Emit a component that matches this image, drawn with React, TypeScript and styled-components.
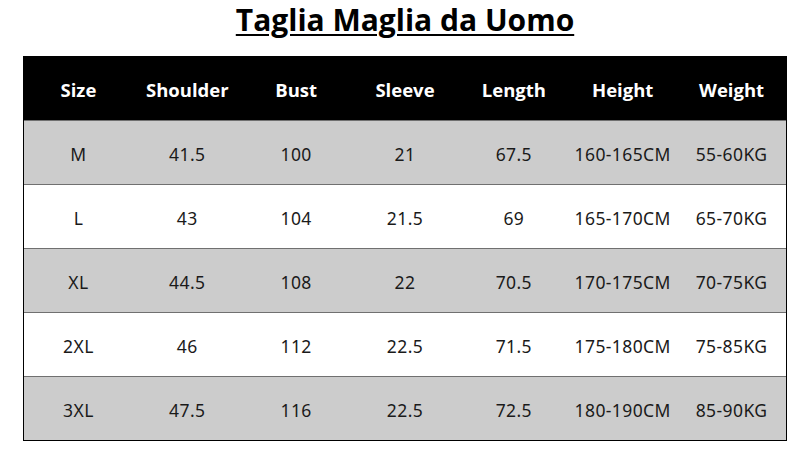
import React from "react";
import styled, { createGlobalStyle } from "styled-components";

const Global = createGlobalStyle`
  html, body { margin: 0; padding: 0; background: #ffffff; }
  body { font-family: "Noto Sans", "Open Sans", sans-serif; }
`;

const Page = styled.div`
  width: 810px;
  height: 461px;
  display: flex;
  flex-direction: column;
  align-items: center;
`;

const Title = styled.h1`
  margin: 0;
  height: 56px;
  display: flex;
  align-items: flex-start;
  justify-content: center;
  box-sizing: border-box;
  font-family: "Open Sans", "Noto Sans", sans-serif;
  font-weight: 700;
  font-size: 30px;
  line-height: 40px;
  color: #000;
  text-decoration: underline;
  text-decoration-thickness: 2px;
  text-underline-offset: 3px;
`;

const Table = styled.div`
  width: 764px;
  box-sizing: border-box;
  border-left: 1px solid #000;
  border-right: 1px solid #000;
  border-bottom: 1px solid #000;
  display: flex;
  flex-direction: column;
`;

const Row = styled.div<{ $variant: "head" | "gray" | "white" }>`
  display: grid;
  grid-template-columns: repeat(7, 1fr);
  height: ${(p) => (p.$variant === "head" ? "64px" : "63px")};
  background: ${(p) =>
    p.$variant === "head" ? "#000" : p.$variant === "gray" ? "#cccccc" : "#ffffff"};
  border-top: ${(p) => (p.$variant === "head" ? "none" : "1px solid #707070")};
`;

const Cell = styled.div<{ $head?: boolean }>`
  display: flex;
  align-items: center;
  justify-content: center;
  white-space: nowrap;
  box-sizing: border-box;
  padding-top: ${(p) => (p.$head ? "2px" : "3px")};
  font-family: ${(p) => (p.$head ? `"Open Sans", "Noto Sans", sans-serif` : `"Noto Sans", sans-serif`)};
  font-weight: ${(p) => (p.$head ? 700 : 400)};
  font-size: ${(p) => (p.$head ? "18.5px" : "17.5px")};
  letter-spacing: ${(p) => (p.$head ? "0" : "0.4px")};
  color: ${(p) => (p.$head ? "#ffffff" : "#1a1a1a")};
`;

const headers = ["Size", "Shoulder", "Bust", "Sleeve", "Length", "Height", "Weight"];
const rows = [
  ["M", "41.5", "100", "21", "67.5", "160-165CM", "55-60KG"],
  ["L", "43", "104", "21.5", "69", "165-170CM", "65-70KG"],
  ["XL", "44.5", "108", "22", "70.5", "170-175CM", "70-75KG"],
  ["2XL", "46", "112", "22.5", "71.5", "175-180CM", "75-85KG"],
  ["3XL", "47.5", "116", "22.5", "72.5", "180-190CM", "85-90KG"],
];

export default function App() {
  return (
    <>
      <Global />
      <Page>
        <Title>Taglia Maglia da Uomo</Title>
        <Table>
          <Row $variant="head">
            {headers.map((h) => (
              <Cell key={h} $head>
                {h}
              </Cell>
            ))}
          </Row>
          {rows.map((r, i) => (
            <Row key={r[0]} $variant={i % 2 === 0 ? "gray" : "white"}>
              {r.map((c, j) => (
                <Cell key={j}>{c}</Cell>
              ))}
            </Row>
          ))}
        </Table>
      </Page>
    </>
  );
}
